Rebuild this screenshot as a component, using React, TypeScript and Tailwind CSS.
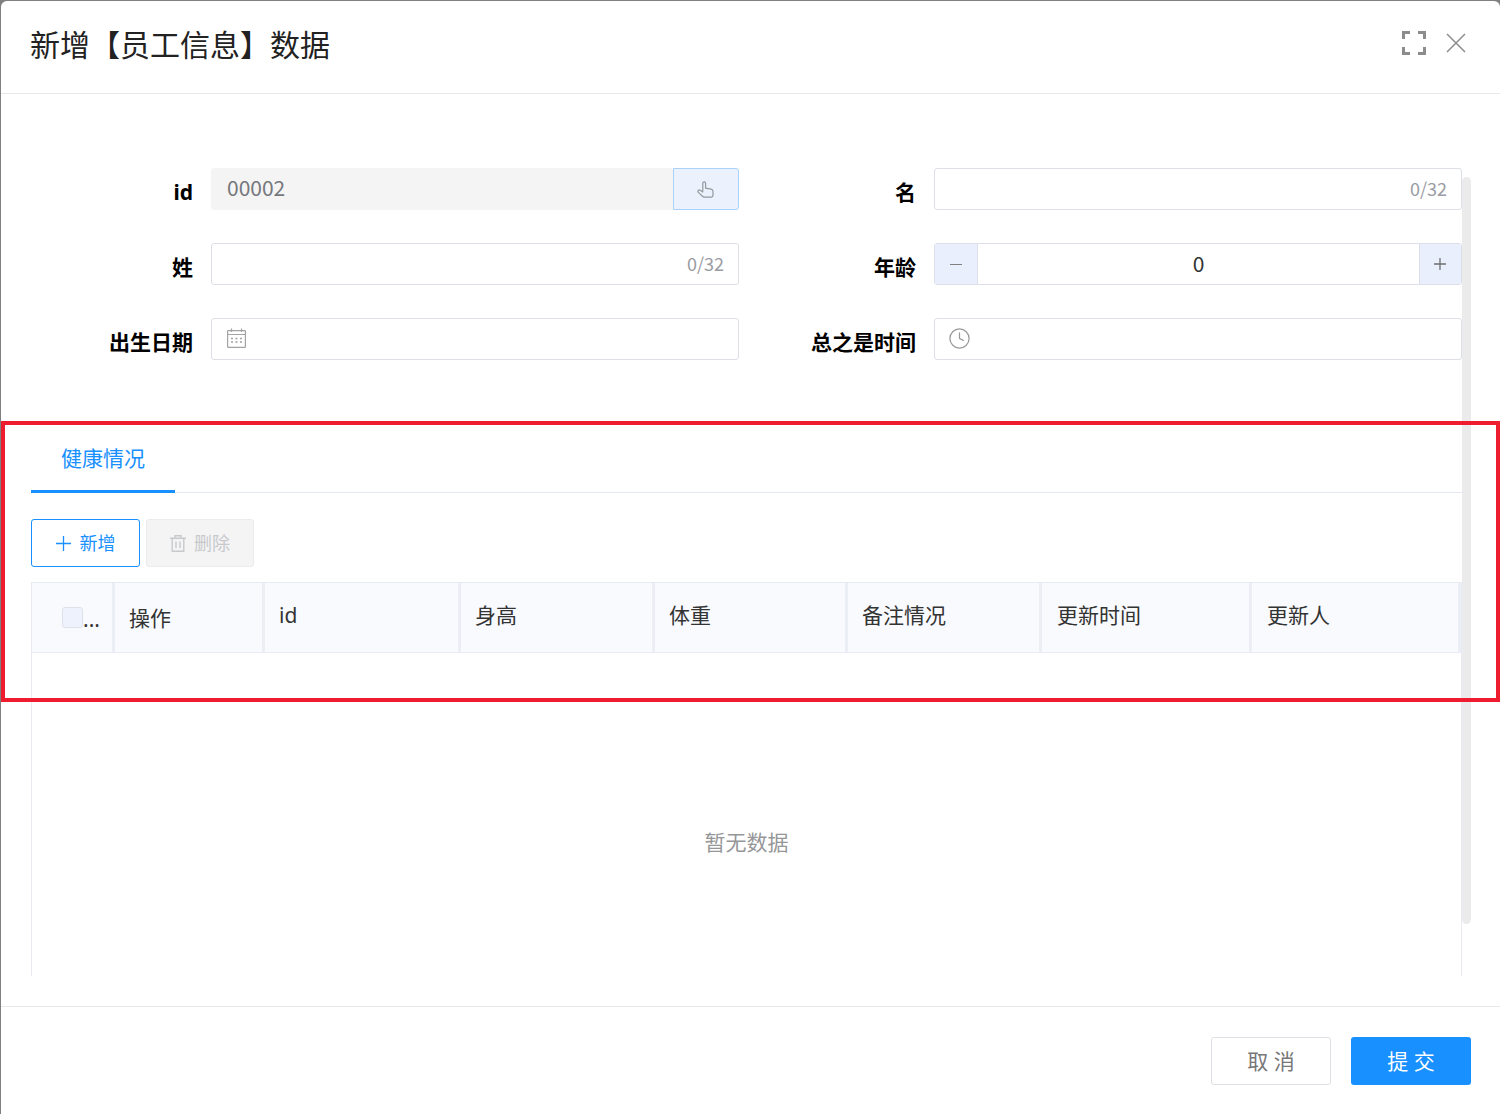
import React from 'react';
import { Clock } from 'lucide-react';

const fontStack = "font-['Noto_Sans','Noto_Sans_CJK_SC',sans-serif]";
const digitFont = "font-['Noto_Sans_CJK_SC',sans-serif]";

const columns = [
  { title: '操作', width: 'w-[150px]', text: 'pl-[14px] pt-[2px]' },
  { title: 'id', width: 'w-[196px]', text: 'pl-[14px] pb-[3px]' },
  { title: '身高', width: 'w-[194px]', text: 'pl-[14px] pb-[3px]' },
  { title: '体重', width: 'w-[193px]', text: 'pl-[14px] pb-[3px]' },
  { title: '备注情况', width: 'w-[194px]', text: 'pl-[14px] pb-[3px]' },
  { title: '更新时间', width: 'w-[210px]', text: 'pl-[15px] pb-[3px]' },
  { title: '更新人', width: 'w-[209px]', text: 'pl-[15px] pb-[3px]' },
];

const FullscreenIcon = () => (
  <svg width="24" height="24" viewBox="0 0 24 24" fill="none" stroke="#8c8c8c" strokeWidth="3">
    <path d="M1.5 8V1.5H8M16 1.5H22.5V8M1.5 16V22.5H8M22.5 16V22.5H16" />
  </svg>
);

const CloseIcon = () => (
  <svg width="20" height="20" viewBox="0 0 20 20" fill="none" stroke="#8c8c8c" strokeWidth="1.5">
    <path d="M1 1L19 19M19 1L1 19" />
  </svg>
);

const PlusIcon = ({ size, className }: { size: number; className?: string }) => (
  <svg width={size} height={size} viewBox={`0 0 ${size} ${size}`} fill="none" stroke="currentColor" strokeWidth="1.3" className={className}>
    <path d={`M0 ${size / 2}H${size}M${size / 2} 0V${size}`} />
  </svg>
);

const HandIcon = () => (
  <svg width="17" height="17" viewBox="0 0 17 17" fill="none" stroke="#95989d" strokeWidth="1.2" strokeLinejoin="round" strokeLinecap="round">
    <path d="M5.8 10V2.2C5.8 0.4 8.6 0.4 8.6 2.2V7.2L14 8.2C15.4 8.5 16 9.3 16 10.4V14C16 15.4 15.2 16.2 14 16.2H7.4C6.6 16.2 6 15.8 5.5 15.2L1.4 11.4C0.2 10.2 1.8 8.2 3.2 9.2L5.8 11" />
  </svg>
);

const CalendarIcon = () => (
  <svg width="19" height="20" viewBox="0 0 19 20" fill="none" stroke="#a3a3a3" strokeWidth="1.2">
    <rect x="0.6" y="2.6" width="17.8" height="16.8" rx="0.6" />
    <path d="M0.6 6.5H18.4M4.5 0.5V4M14.5 0.5V4" />
    <path d="M4 10.5H6M8.5 10.5H10.5M13 10.5H15M4 14H6M8.5 14H10.5M13 14H15" strokeWidth="1.5" />
  </svg>
);

const TrashIcon = () => (
  <svg width="16" height="17" viewBox="0 0 16 17" fill="none" stroke="#c8c9cc" strokeWidth="1.4">
    <path d="M0 3.2H16M5 3.2V0.8H11V3.2M2.2 3.2V16.2H13.8V3.2M6 6.5V13M10 6.5V13" />
  </svg>
);

const Label = ({ children }: { children: React.ReactNode }) => (
  <div className="w-[162px] mr-[18px] pt-[6px] text-right text-[21px] font-bold text-black leading-none">{children}</div>
);

const Field = ({ label, children }: { label: string; children: React.ReactNode }) => (
  <div className="flex items-center h-[42px]">
    <Label>{label}</Label>
    {children}
  </div>
);

const TextInput = () => (
  <div className={`flex-1 h-full flex items-center justify-end pr-[14px] pb-[2px] border border-[#dcdfe6] rounded-[3px] text-[18px] text-[#9a9ca3] ${digitFont}`}>
    0/32
  </div>
);

export default function App() {
  return (
    <div className={`relative h-[1114px] overflow-hidden bg-[#808080] pt-px pl-px ${fontStack}`}>
      <div className="h-full flex flex-col bg-white rounded-t-[6px]">
        <header className="h-[93px] shrink-0 flex items-center justify-between border-b border-[#e8e8e8] pl-[29px] pr-[33px]">
          <h1 className="text-[30px] text-[#222] leading-none -mt-[4px]">新增【员工信息】数据</h1>
          <div className="flex items-center gap-[20px] -mt-[8px] mr-px">
            <FullscreenIcon />
            <CloseIcon />
          </div>
        </header>

        <main className="relative flex-1 min-h-0 flex flex-col pl-[30px] pr-[38px] pb-[30px]">
          <div className="absolute right-[29px] top-[83px] w-[9px] h-[747px] rounded-full bg-[#ebebeb]" />

          <div className="grid grid-cols-2 gap-x-[15px] gap-y-[33px] pt-[74px]">
            <Field label="id">
              <div className="flex-1 h-full flex">
                <div className={`flex-1 flex items-center pl-[16px] pb-[2px] bg-[#f4f4f4] rounded-l-[3px] text-[21px] text-[#75777c] ${digitFont}`}>00002</div>
                <div className="w-[66px] flex items-center justify-center pr-px bg-[#ebf2fd] border border-[#a9d3fb] rounded-r-[3px]">
                  <HandIcon />
                </div>
              </div>
            </Field>
            <Field label="名">
              <TextInput />
            </Field>
            <Field label="姓">
              <TextInput />
            </Field>
            <Field label="年龄">
              <div className="flex-1 h-full flex border border-[#dcdfe6] rounded-[3px]">
                <div className="w-[43px] flex items-center justify-center bg-[#e9effc] border-r border-[#dcdfe6]">
                  <span className="w-[12px] h-px bg-[#808080]" />
                </div>
                <div className={`flex-1 flex items-center justify-center pb-px text-[21px] text-[#333] ${digitFont}`}>0</div>
                <div className="w-[42px] flex items-center justify-center pr-px bg-[#e9effc] border-l border-[#dcdfe6]">
                  <PlusIcon size={12} className="text-[#707070]" />
                </div>
              </div>
            </Field>
            <Field label="出生日期">
              <div className="flex-1 h-full flex items-center pl-[15px] pb-[2px] border border-[#dcdfe6] rounded-[3px]">
                <CalendarIcon />
              </div>
            </Field>
            <Field label="总之是时间">
              <div className="flex-1 h-full flex items-center pl-[13px] pb-px border border-[#dcdfe6] rounded-[3px]">
                <Clock size={23} strokeWidth={1.3} className="text-[#9a9a9a]" />
              </div>
            </Field>
          </div>

          <div className="mt-[65px] h-[68px] shrink-0 flex border-b border-[#e4e8f0]">
            <div className="w-[144px] h-[68px] flex items-center justify-center pt-[2px] border-b-[3px] border-[#1890ff] text-[21px] text-[#1890ff]">
              健康情况
            </div>
          </div>

          <div className="flex gap-[6px] mt-[26px] shrink-0">
            <button className="w-[109px] h-[48px] flex items-center justify-center gap-[9px] border border-[#1890ff] rounded-[3px] bg-white text-[18px] text-[#1890ff]">
              <PlusIcon size={15} />
              新增
            </button>
            <button className="w-[108px] h-[48px] flex items-center justify-center gap-[8px] border border-[#ececee] rounded-[3px] bg-[#f4f4f5] text-[18px] text-[#c8c9cc]">
              <TrashIcon />
              删除
            </button>
          </div>

          <div className="mt-[15px] flex-1 min-h-0 flex flex-col border border-[#e8ebf3] border-b-0">
            <div className="h-[70px] shrink-0 flex bg-[#f9fafe] border-b border-[#e8ebf3] text-[21px] text-[#333]">
              <div className="w-[83px] flex items-center pl-[30px] border-r-[3px] border-[#eceef6]">
                <span className="w-[21px] h-[21px] shrink-0 rounded-[3px] bg-[#eef2fc] border border-[#dde1ea]" />
                <span className="mt-[3px] text-[21px] leading-none">...</span>
              </div>
              {columns.map((col) => (
                <div key={col.title} className={`${col.width} flex items-center border-r-[3px] border-[#eceef6] ${col.text}`}>
                  {col.title}
                </div>
              ))}
            </div>
            <div className="flex-1 flex items-center justify-center pt-[56px] text-[21px] text-[#969799]">暂无数据</div>
          </div>
        </main>

        <footer className="h-[108px] shrink-0 flex items-center justify-end gap-[20px] border-t border-[#e8e8e8] pr-[29px]">
          <button className="w-[120px] h-[48px] pt-[3px] border border-[#dfe0e6] rounded-[3px] bg-white text-[21px] text-[#777]">取 消</button>
          <button className="w-[120px] h-[48px] pt-[3px] rounded-[3px] bg-[#1890ff] text-[21px] text-white">提 交</button>
        </footer>
      </div>

      {/* annotation drawn over the tab section */}
      <div className="absolute left-px top-[421px] w-[1499px] h-[281px] border-4 border-[#ed1c2e] pointer-events-none" />
    </div>
  );
}
